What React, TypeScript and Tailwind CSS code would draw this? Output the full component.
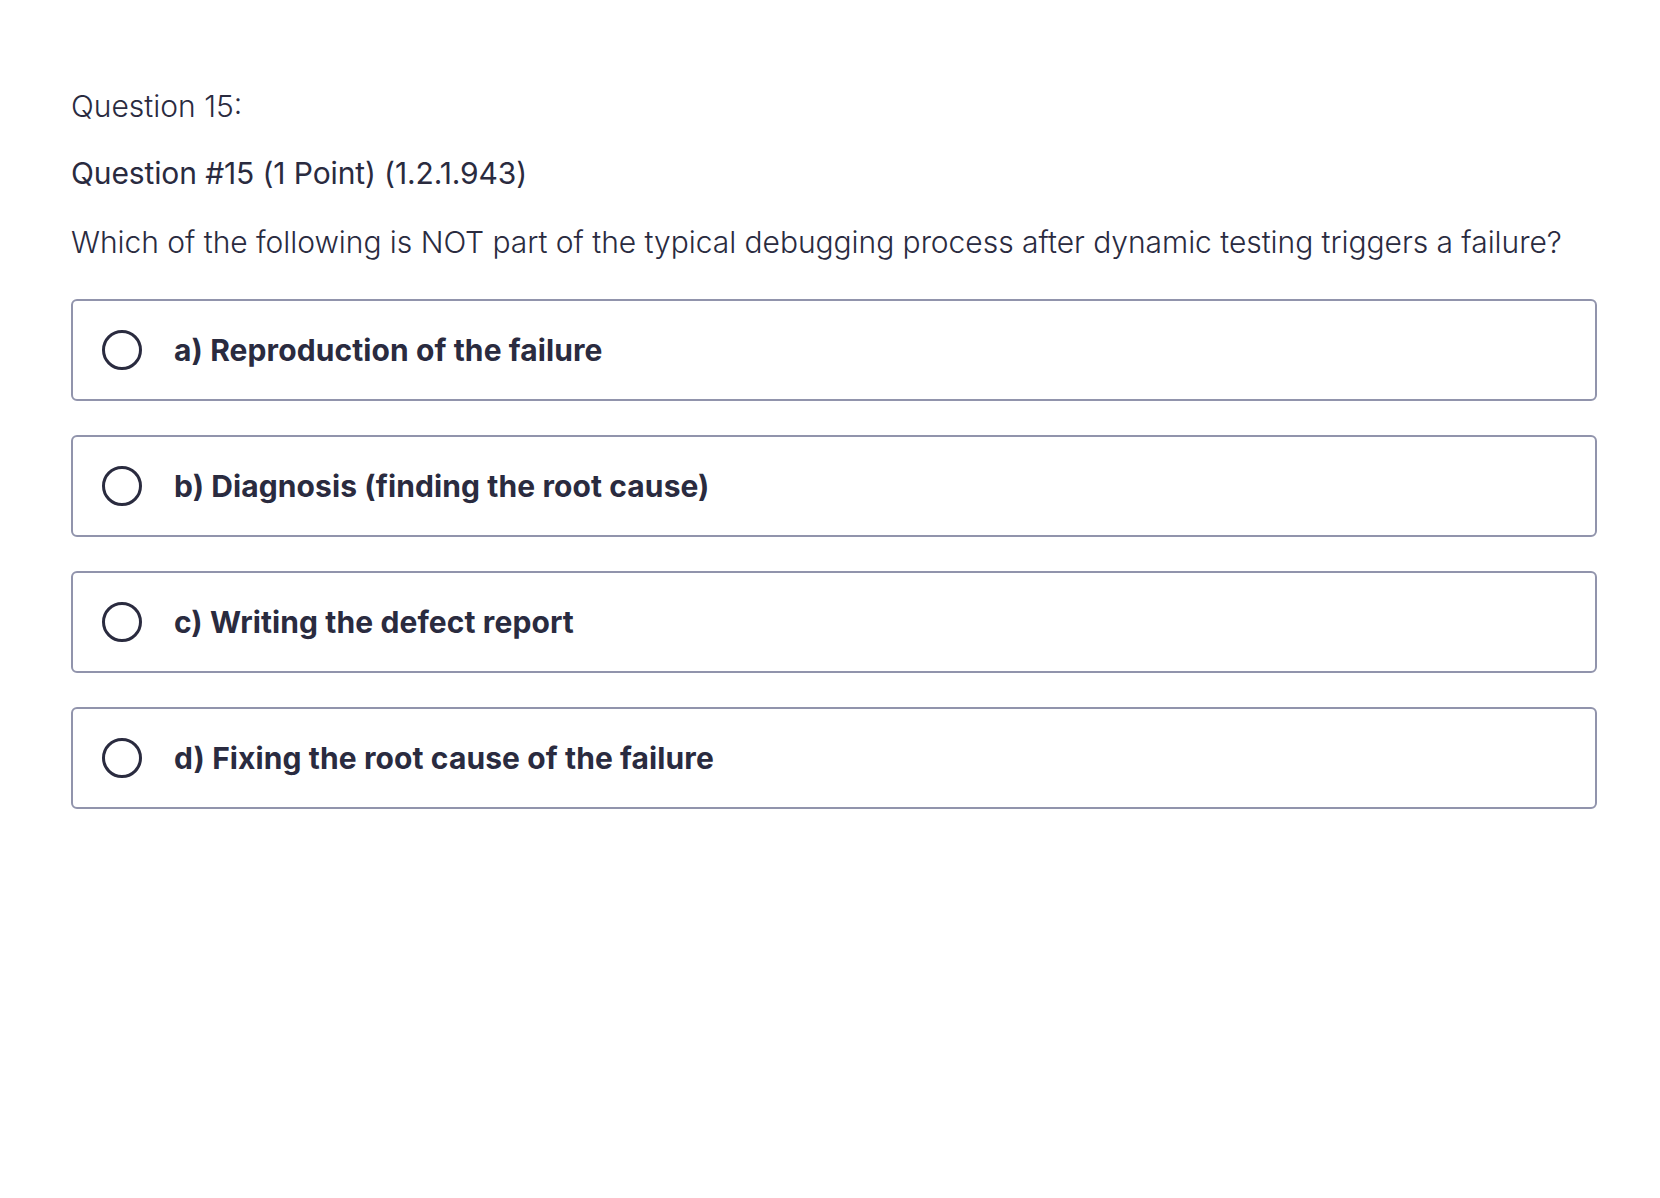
import { useState } from "react";

const options = [
  "a) Reproduction of the failure",
  "b) Diagnosis (finding the root cause)",
  "c) Writing the defect report",
  "d) Fixing the root cause of the failure",
];

export default function App() {
  const [selected, setSelected] = useState<string>("");

  return (
    <div
      className="min-h-screen bg-white pl-[71px] pr-[63px] pt-[88px] text-[#2a2b3f]"
      style={{ fontFamily: "Inter, 'Noto Sans', sans-serif" }}
    >
      <div className="text-[30px] leading-[36px] font-light">Question 15:</div>
      <div className="mt-[31px] text-[30px] leading-[36px] font-normal tracking-[-0.12px]">
        Question #15 (1 Point) (1.2.1.943)
      </div>
      <div className="mt-[33px] text-[30px] leading-[36px] font-light tracking-[-0.04px]">
        Which of the following is NOT part of the typical debugging process after dynamic testing triggers a failure?
      </div>
      <div className="mt-[39px] flex flex-col gap-[34px]">
        {options.map((option) => (
          <label
            key={option}
            className="flex h-[102px] cursor-pointer items-center rounded-md border-2 border-[#9194ac] pl-[29px]"
          >
            <input
              type="radio"
              name="q15"
              value={option}
              checked={selected === option}
              onChange={() => setSelected(option)}
              className="sr-only"
            />
            <span className="flex h-10 w-10 shrink-0 items-center justify-center rounded-full border-[3.5px] border-[#2a2b3f]">
              {selected === option && <span className="h-4 w-4 rounded-full bg-[#2a2b3f]" />}
            </span>
            <span className="ml-[32px] text-[30px] font-bold tracking-[0.1px]">{option}</span>
          </label>
        ))}
      </div>
    </div>
  );
}
